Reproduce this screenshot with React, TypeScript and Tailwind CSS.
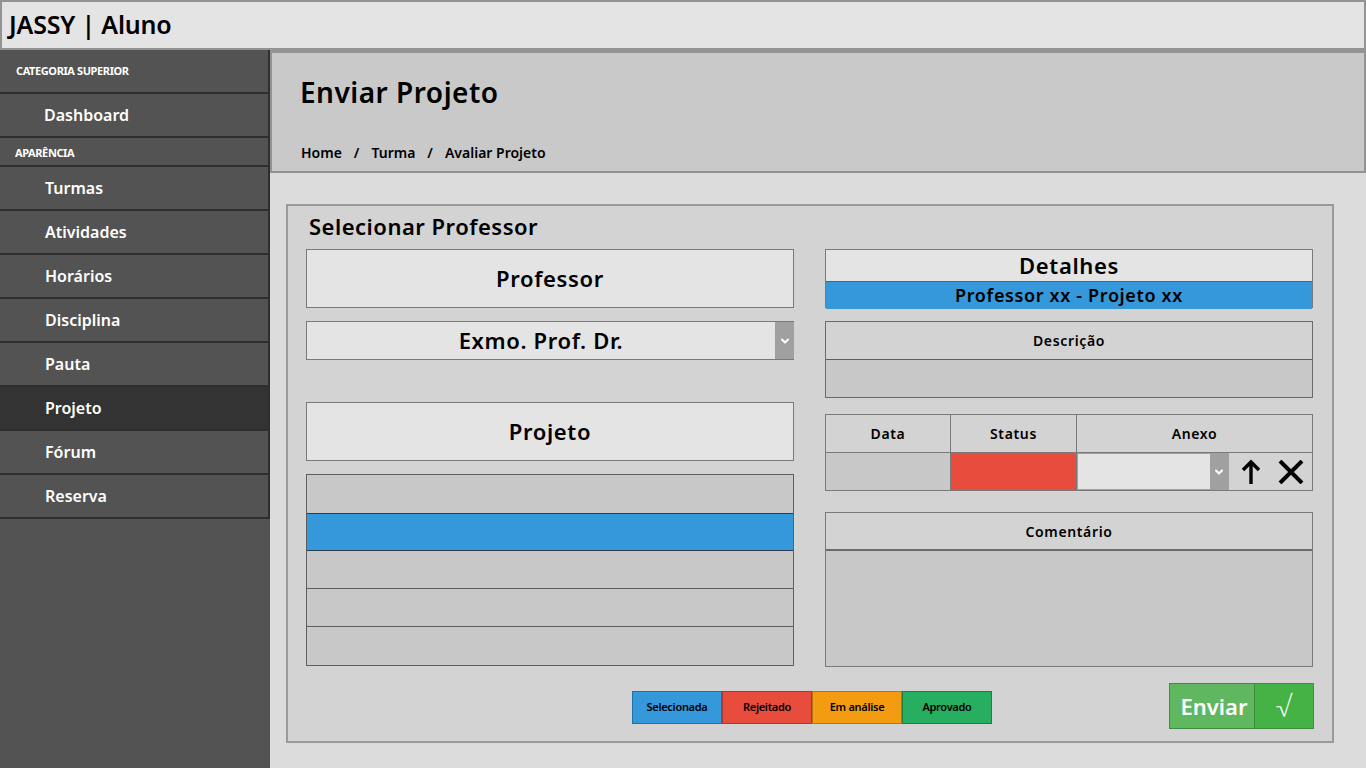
import { ChevronDown } from "lucide-react";

const menu = [
  { label: "Turmas" },
  { label: "Atividades" },
  { label: "Horários" },
  { label: "Disciplina" },
  { label: "Pauta" },
  { label: "Projeto", active: true },
  { label: "Fórum" },
  { label: "Reserva" },
];

const legend = [
  { label: "Selecionada", cls: "bg-[#3498db] border-[#2470a5]" },
  { label: "Rejeitado", cls: "bg-[#e74c3c] border-[#a8392d]" },
  { label: "Em análise", cls: "bg-[#f39c12] border-[#b8770e]" },
  { label: "Aprovado", cls: "bg-[#27ae60] border-[#1d7f46]" },
];

function SelectArrow({ className }: { className: string }) {
  return (
    <div className={`flex items-center justify-center bg-[#a0a0a0] ${className}`}>
      <ChevronDown size={12} strokeWidth={4} className="text-white" />
    </div>
  );
}

export default function App() {
  return (
    <div className="w-[1366px] h-[768px] overflow-hidden flex flex-col bg-[#dcdcdc] text-black font-['Noto_Sans','Lato',sans-serif]">
      <header className="h-[50px] shrink-0 bg-[#e4e4e4] border-2 border-[#939393] flex items-center pl-[7px]">
        <h1 className="text-[25px] font-semibold tracking-[-0.2px]">JASSY | Aluno</h1>
      </header>

      <div className="flex flex-1 min-h-0">
        <aside className="w-[270px] shrink-0 bg-[#535353] text-white">
          <div className="h-[44px] flex items-center pl-[16px] border-b-2 border-r-2 border-[#2e2e2e] text-[11px] font-bold tracking-[-0.4px]">
            CATEGORIA SUPERIOR
          </div>
          <div className="h-[44px] flex items-center pl-[44px] border-b-2 border-r-2 border-[#2e2e2e] text-[16px] font-semibold">
            Dashboard
          </div>
          <div className="h-[29px] flex items-center pt-[3px] pl-[15px] border-b-2 border-r-2 border-[#2e2e2e] text-[11px] font-bold tracking-[-0.4px]">
            APARÊNCIA
          </div>
          {menu.map((m) => (
            <div
              key={m.label}
              className={`h-[44px] flex items-center pl-[45px] border-b-2 border-r-2 border-[#2e2e2e] text-[16px] font-semibold ${
                m.active ? "bg-[#333333]" : ""
              }`}
            >
              {m.label}
            </div>
          ))}
        </aside>

        <main className="flex-1 flex flex-col">
          <div className="h-[123px] bg-[#c9c9c9] border-2 border-t-[3px] border-[#939393] pl-[28px] flex flex-col">
            <h2 className="text-[28px] font-semibold mt-[21px] leading-[36px] tracking-[0.5px]">Enviar Projeto</h2>
            <nav className="mt-[33px] text-[14px] font-semibold flex gap-[12px] pl-[1px] leading-[20px]">
              <span>Home</span>
              <span>/</span>
              <span>Turma</span>
              <span>/</span>
              <span>Avaliar Projeto</span>
            </nav>
          </div>

          <section className="mt-[31px] ml-[16px] w-[1048px] h-[539px] bg-[#d3d3d3] border-2 border-[#9a9a9a] px-[18px] flex flex-col">
            <h3 className="text-[22px] font-semibold mt-[6px] ml-[3px] leading-[28px] tracking-[0.5px]">Selecionar Professor</h3>

            <div className="mt-[9px] flex gap-[31px] tracking-[0.04em]">
              {/* left column */}
              <div className="w-[488px] flex flex-col">
                <div className="h-[59px] bg-[#e4e4e4] border border-[#7a7a7a] flex items-center justify-center text-[22px] font-semibold">
                  Professor
                </div>
                <div className="mt-[13px] h-[39px] bg-[#e4e4e4] border-b border-t border-l border-[#7a7a7a] flex">
                  <div className="flex-1 flex items-center justify-center text-[22px] font-semibold">
                    Exmo. Prof. Dr.
                  </div>
                  <SelectArrow className="w-[19px]" />
                </div>
                <div className="mt-[42px] h-[59px] bg-[#e4e4e4] border border-[#7a7a7a] flex items-center justify-center text-[22px] font-semibold">
                  Projeto
                </div>
                <div className="mt-[13px] border border-[#5f5f5f] flex flex-col">
                  <div className="h-[38px] bg-[#c8c8c8]" />
                  <div className="h-[38px] bg-[#3498db] border-y border-[#2c3e50]" />
                  <div className="h-[38px] bg-[#c8c8c8] border-b border-[#5f5f5f]" />
                  <div className="h-[38px] bg-[#c8c8c8] border-b border-[#5f5f5f]" />
                  <div className="h-[38px] bg-[#c8c8c8]" />
                </div>
              </div>

              {/* right column */}
              <div className="w-[488px] flex flex-col">
                <div className="h-[59px] border border-[#7a7a7a] flex flex-col">
                  <div className="h-[31px] bg-[#e4e4e4] flex items-center justify-center text-[22px] font-semibold">
                    Detalhes
                  </div>
                  <div className="flex-1 bg-[#3498db] border-t border-[#2470a5] flex items-center justify-center text-[18px] font-semibold">
                    Professor xx - Projeto xx
                  </div>
                </div>

                <div className="mt-[13px] h-[77px] border border-[#6a6a6a] flex flex-col">
                  <div className="h-[38px] flex items-center justify-center text-[14px] font-semibold border-b border-[#5f5f5f]">
                    Descrição
                  </div>
                  <div className="flex-1 bg-[#c8c8c8]" />
                </div>

                <div className="mt-[16px] h-[77px] border border-[#7a7a7a] grid grid-cols-[125px_126px_1fr] grid-rows-[38px_1fr]">
                  <div className="flex items-center justify-center text-[14px] font-semibold border-r border-b border-[#7a7a7a]">Data</div>
                  <div className="flex items-center justify-center text-[14px] font-semibold border-r border-b border-[#7a7a7a]">Status</div>
                  <div className="flex items-center justify-center text-[14px] font-semibold border-b border-[#7a7a7a]">Anexo</div>
                  <div className="bg-[#c8c8c8] border-r border-[#7a7a7a]" />
                  <div className="bg-[#e74c3c] border-r border-[#7a7a7a]" />
                  <div className="flex items-stretch">
                    <div className="w-[152px] flex border border-[#a0a0a0] bg-[#e4e4e4]">
                      <div className="flex-1" />
                      <SelectArrow className="w-[18px]" />
                    </div>
                    <div className="flex-1 flex items-center justify-between pl-[12px] pr-[8px]">
                      <svg width="20" height="26" viewBox="0 0 20 26">
                        <path d="M10 25V4M2 11l8-8 8 8" stroke="black" strokeWidth="3.4" fill="none" />
                      </svg>
                      <svg width="26" height="24" viewBox="0 0 26 24">
                        <path d="M2 1l22 22M24 1L2 23" stroke="black" strokeWidth="4" fill="none" />
                      </svg>
                    </div>
                  </div>
                </div>

                <div className="mt-[21px] h-[155px] border border-[#7a7a7a] flex flex-col">
                  <div className="h-[38px] flex items-center justify-center text-[14px] font-semibold border-b-2 border-[#6a6a6a]">
                    Comentário
                  </div>
                  <div className="flex-1 bg-[#c8c8c8]" />
                </div>
              </div>
            </div>

            <div className="flex-1 flex items-start">
              <div className="mt-[24px] ml-[326px] flex">
                {legend.map((l) => (
                  <div
                    key={l.label}
                    className={`w-[90px] h-[33px] border flex items-center justify-center text-[11px] font-semibold tracking-[-0.3px] ${l.cls}`}
                  >
                    {l.label}
                  </div>
                ))}
              </div>
              <div className="mt-[16px] ml-auto flex h-[46px] border border-[#3e8e3e] text-white">
                <div className="w-[84px] bg-[#5fb760] flex items-center justify-center pl-[4px] text-[22px] font-semibold">
                  Enviar
                </div>
                <div className="w-[59px] bg-[#44b244] border-l border-[#3e8e3e] flex items-center justify-center text-[28px] font-light">
                  √
                </div>
              </div>
            </div>
          </section>
        </main>
      </div>
    </div>
  );
}
